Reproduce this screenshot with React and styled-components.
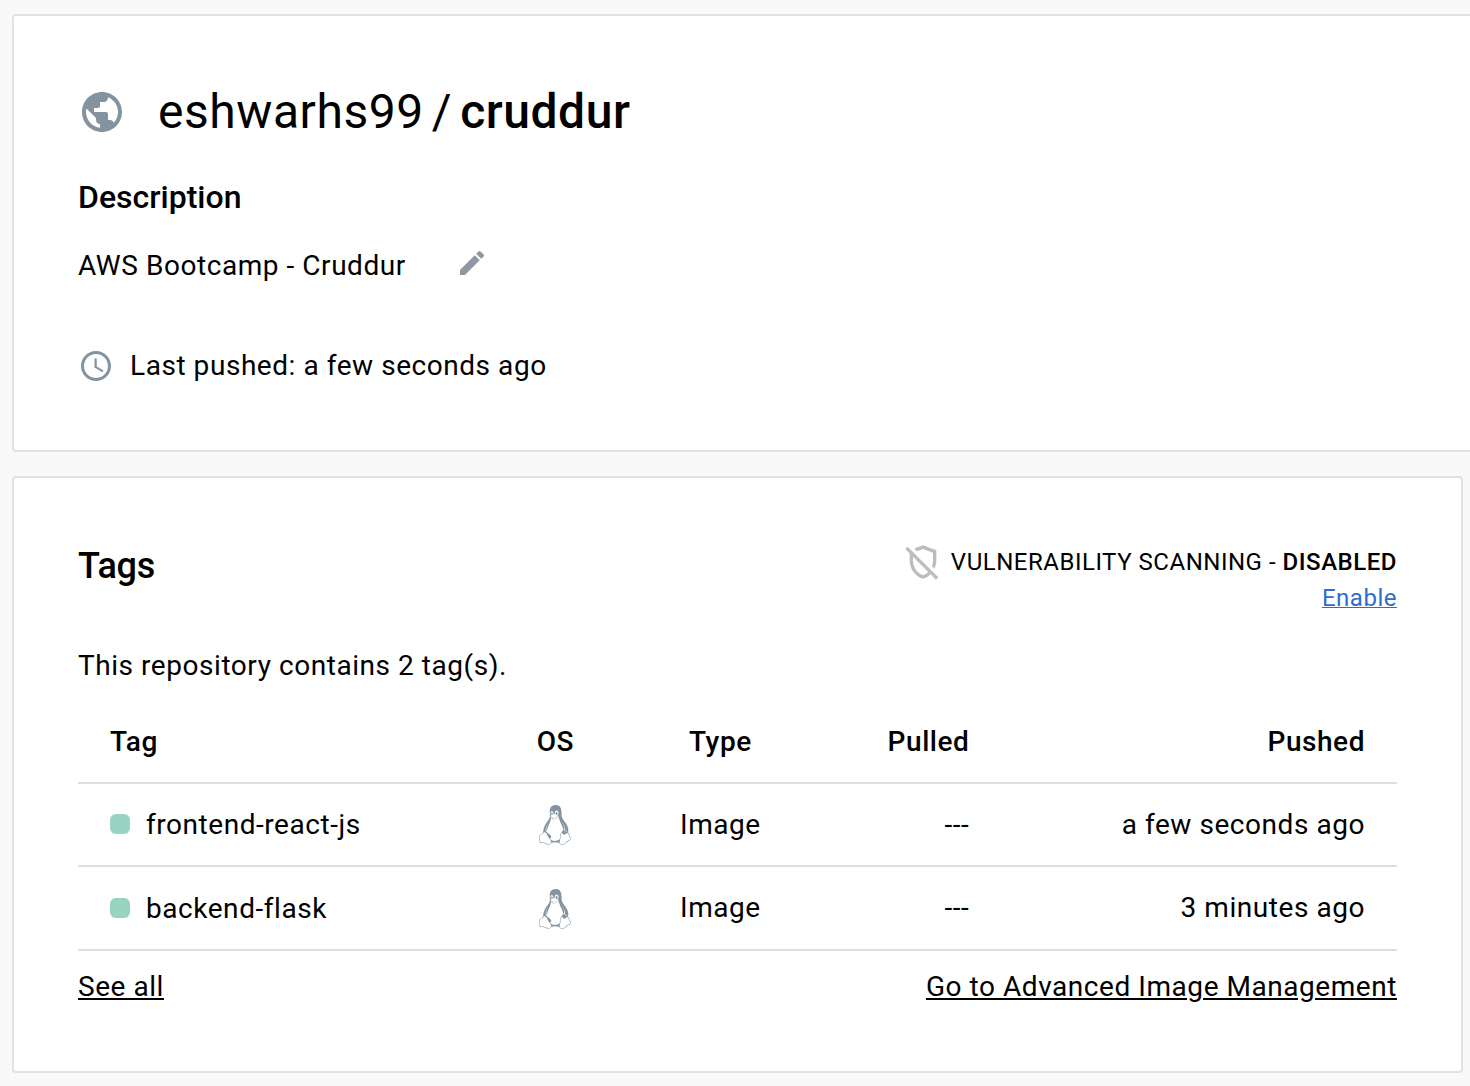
import React from "react";
import styled, { createGlobalStyle } from "styled-components";
import { MdPublic, MdEdit, MdAccessTime, MdOutlineRemoveModerator } from "react-icons/md";
import { FaLinux } from "react-icons/fa";

const Global = createGlobalStyle`
  * { box-sizing: border-box; }
  body {
    margin: 0;
    overflow: hidden;
    background: #f9f9f9;
    color: #000;
    font-family: Roboto, sans-serif;
    font-size: 28px;
    letter-spacing: 0.55px;
    line-height: 40px;
  }
  svg { display: block; flex: none; }
`;

const Page = styled.main`
  width: 1470px;
  height: 1086px;
  overflow: hidden;
  padding: 14px 0 0 12px;
  display: flex;
  flex-direction: column;
  gap: 24px;
`;

const Card = styled.section`
  flex: none;
  width: ${(p) => p.$width}px;
  height: ${(p) => p.$height}px;
  padding: 64px;
  background: #fff;
  border: 2px solid #e1e2e6;
  border-radius: 4px;
`;

const Title = styled.h1`
  margin: 0;
  display: flex;
  align-items: center;
  font-size: 48px;
  font-weight: 400;
  line-height: 64px;
  svg { margin-right: 32px; color: #8393a0; }
`;

const Slash = styled.span`
  margin: 0 8px;
`;

const Strong = styled.strong`
  font-weight: 500;
`;

const Subtitle = styled.h2`
  margin: 32px 0 0;
  font-size: 32px;
  font-weight: 500;
  letter-spacing: 0;
  line-height: 42px;
`;

const Description = styled.div`
  margin-top: 28px;
  display: flex;
  align-items: center;
  gap: 50px;
  svg { color: #8f96a6; margin-top: -6px; }
`;

const LastPushed = styled.div`
  margin-top: 60px;
  display: flex;
  align-items: center;
  gap: 16px;
  svg { color: #8393a0; }
`;

const TagsHeader = styled.header`
  height: 72px;
  display: flex;
  justify-content: space-between;
`;

const TagsTitle = styled.h2`
  margin: 0;
  font-size: 36px;
  font-weight: 500;
  letter-spacing: -0.2px;
  line-height: 48px;
`;

const Scanning = styled.div`
  padding-top: 2px;
  display: flex;
  flex-direction: column;
  align-items: flex-end;
  font-size: 24px;
  letter-spacing: 0.52px;
  line-height: 36px;
`;

const ScanStatus = styled.div`
  height: 36px;
  display: flex;
  align-items: center;
  gap: 8px;
  svg { color: #bdbdbd; }
`;

const Link = styled.a`
  color: ${(p) => p.$color || "#000"};
  text-decoration: underline;
  text-decoration-thickness: ${(p) => p.$line || "auto"};
`;

const Summary = styled.p`
  margin: 32px 0 0;
`;

const Table = styled.div`
  margin-top: 16px;
`;

const Row = styled.div`
  display: grid;
  grid-template-columns: 362.4px 166px 164px 167px 1fr;
  align-items: center;
  height: ${(p) => p.$height}px;
  padding: 0 32px;
  border-bottom: 2px solid #dedede;
  font-weight: ${(p) => (p.$head ? 500 : 400)};
`;

const Cell = styled.div`
  display: flex;
  align-items: center;
  justify-content: ${(p) => p.$align || "flex-start"};
  padding-top: ${(p) => p.$drop || 0}px;
  white-space: nowrap;
`;

const Status = styled.span`
  width: 20px;
  height: 20px;
  margin: 0 16px 2px 0;
  border-radius: 6px;
  background: #99d3c1;
`;

const LinuxIcon = styled(FaLinux).attrs({ preserveAspectRatio: "none" })`
  width: 34px;
  height: 40px;
  color: #8393a0;
`;

const Footer = styled.footer`
  margin-top: 16px;
  display: flex;
  justify-content: space-between;
`;

const tags = [
  { name: "frontend-react-js", pushed: "a few seconds ago", height: 83, drop: 0 },
  { name: "backend-flask", pushed: "3 minutes ago", height: 84, drop: 2 },
];

export default function App() {
  return (
    <>
      <Global />
      <Page>
        <Card $width={1500} $height={438}>
          <Title>
            <MdPublic size={48} />
            eshwarhs99<Slash>/</Slash><Strong>cruddur</Strong>
          </Title>
          <Subtitle>Description</Subtitle>
          <Description>
            AWS Bootcamp - Cruddur
            <MdEdit size={32} />
          </Description>
          <LastPushed>
            <MdAccessTime size={36} />
            Last pushed: a few seconds ago
          </LastPushed>
        </Card>

        <Card $width={1451} $height={597}>
          <TagsHeader>
            <TagsTitle>Tags</TagsTitle>
            <Scanning>
              <ScanStatus>
                <MdOutlineRemoveModerator size={40} />
                <span>VULNERABILITY SCANNING - <Strong>DISABLED</Strong></span>
              </ScanStatus>
              <Link $color="#2f6bd0" $line="1px">Enable</Link>
            </Scanning>
          </TagsHeader>
          <Summary>This repository contains 2 tag(s).</Summary>
          <Table>
            <Row $head $height={82}>
              <Cell>Tag</Cell>
              <Cell $align="center">OS</Cell>
              <Cell $align="center">Type</Cell>
              <Cell $align="flex-end">Pulled</Cell>
              <Cell $align="flex-end">Pushed</Cell>
            </Row>
            {tags.map((tag) => (
              <Row key={tag.name} $height={tag.height}>
                <Cell $drop={tag.drop}><Status />{tag.name}</Cell>
                <Cell $align="center" $drop={tag.drop}><LinuxIcon /></Cell>
                <Cell $align="center">Image</Cell>
                <Cell $align="flex-end">---</Cell>
                <Cell $align="flex-end">{tag.pushed}</Cell>
              </Row>
            ))}
          </Table>
          <Footer>
            <Link>See all</Link>
            <Link>Go to Advanced Image Management</Link>
          </Footer>
        </Card>
      </Page>
    </>
  );
}
